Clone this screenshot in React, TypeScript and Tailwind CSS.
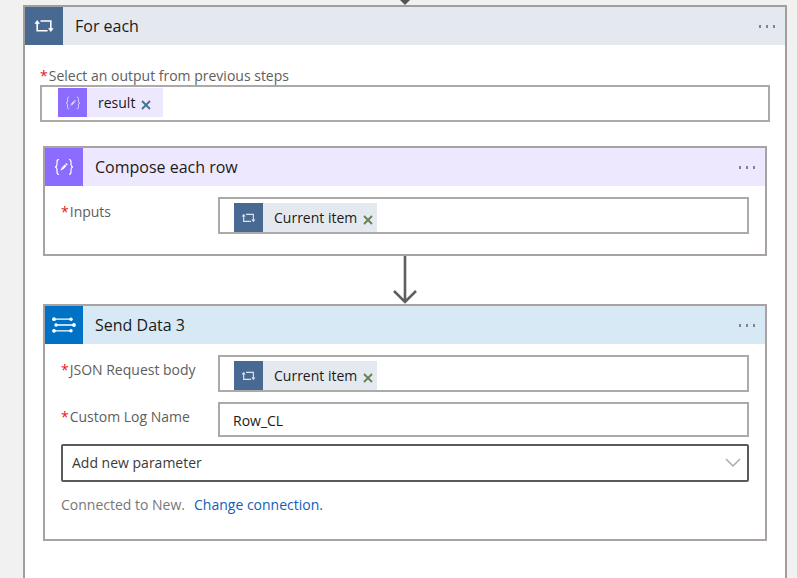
import { useState } from "react";
import type { ReactNode } from "react";

function LoopIcon({ className }: { className: string }) {
  return (
    <svg viewBox="0 0 20 14" className={className} fill="none" stroke="currentColor" strokeWidth="1.6" aria-hidden="true">
      <path d="M3.2 4V11.7H13.5" />
      <path d="M6.5 2H16.8V10" />
      <path d="M0.4 4.8L3.2 1L6 4.8Z" fill="currentColor" stroke="none" />
      <path d="M14 9.2L16.8 13L19.6 9.2Z" fill="currentColor" stroke="none" />
    </svg>
  );
}

function ComposeIcon({ className }: { className: string }) {
  return (
    <svg viewBox="0 0 20 18" className={className} fill="none" stroke="currentColor" strokeWidth="1.2" aria-hidden="true">
      <path d="M5 1.5C3 1.5 3 2.5 3 4.2V6.5C3 8 2.4 8.8 1 9C2.4 9.2 3 10 3 11.5V13.8C3 15.5 3 16.5 5 16.5" />
      <path d="M15 1.5C17 1.5 17 2.5 17 4.2V6.5C17 8 17.6 8.8 19 9C17.6 9.2 17 10 17 11.5V13.8C17 15.5 17 16.5 15 16.5" />
      <path d="M8 11L11.6 7.2" strokeWidth="2.2" />
      <path d="M12 6.8L13 5.8" strokeWidth="2.2" />
      <path d="M6.4 12.6L7.2 10.6L8.4 11.8Z" fill="currentColor" stroke="none" />
    </svg>
  );
}

function DataIcon({ className }: { className: string }) {
  return (
    <svg viewBox="0 0 24 16" className={className} fill="currentColor" stroke="currentColor" aria-hidden="true">
      <g strokeWidth="1.3">
        <path d="M2 2.2H19M4 8H22M2 13.8H19" />
      </g>
      <g stroke="none">
        <circle cx="2" cy="2.2" r="1.9" />
        <circle cx="19" cy="2.2" r="1.7" />
        <circle cx="4" cy="8" r="1.7" />
        <circle cx="22" cy="8" r="1.9" />
        <circle cx="2" cy="13.8" r="1.9" />
        <circle cx="19" cy="13.8" r="1.7" />
      </g>
    </svg>
  );
}

type HeaderProps = { title: string; icon: ReactNode; iconClass: string; barClass: string };

function CardHeader({ title, icon, iconClass, barClass }: HeaderProps) {
  return (
    <header className={`flex h-[38px] items-center ${barClass}`}>
      <span className={`flex h-full w-[38px] shrink-0 items-center justify-center text-white ${iconClass}`}>{icon}</span>
      <h2 className="flex-1 pl-3 text-base leading-6 text-[#1b1a19]">{title}</h2>
      <button type="button" aria-label={`${title} menu`} className="flex h-full items-center gap-[5px] pr-[10px]">
        <span className="h-[3px] w-[2px] bg-[#85828f]" />
        <span className="h-[3px] w-[2px] bg-[#85828f]" />
        <span className="h-[3px] w-[2px] bg-[#85828f]" />
      </button>
    </header>
  );
}

function Label({ htmlFor, children }: { htmlFor: string; children: ReactNode }) {
  return (
    <label htmlFor={htmlFor} className="flex gap-px text-sm leading-[18px] text-[#605e5c]">
      <span className="text-[#e81123]">*</span>
      {children}
    </label>
  );
}

type TokenProps = { text: string; icon: ReactNode; iconClass: string; bodyClass: string; closeClass: string };

function Token({ text, icon, iconClass, bodyClass, closeClass }: TokenProps) {
  return (
    <span className={`flex h-[29px] shrink-0 items-center ${bodyClass}`}>
      <span className={`flex h-full w-[29px] items-center justify-center ${iconClass}`}>{icon}</span>
      <span className="pl-[11px] text-sm leading-5 text-[#1b1a19]">{text}</span>
      <button type="button" aria-label={`Remove ${text}`} className={`pt-1 pl-[6px] ${closeClass}`}>
        <svg viewBox="0 0 10 10" className="size-[10px]" fill="none" stroke="currentColor" strokeWidth="1.8" aria-hidden="true">
          <path d="M1 1L9 9M9 1L1 9" />
        </svg>
      </button>
    </span>
  );
}

function TokenField({ id, className, children }: { id: string; className: string; children: ReactNode }) {
  return (
    <div className={`flex h-[37px] border-2 border-[#acaaa9] bg-white ${className}`}>
      {children}
      <input id={id} type="text" className="min-w-0 flex-1 px-1 text-sm outline-none" />
    </div>
  );
}

function CurrentItem() {
  return (
    <Token
      text="Current item"
      icon={<LoopIcon className="h-[10px] w-[15px]" />}
      iconClass="bg-[#486991] text-[#dde5ee]"
      bodyClass="bg-[#e4e9f0] pr-1"
      closeClass="text-[#66804f]"
    />
  );
}

export default function App() {
  const [logName, setLogName] = useState("Row_CL");

  return (
    <div className="flex min-h-screen flex-col bg-[#f1f1f1] pr-[10px] pl-[23px] font-['Open_Sans','Noto_Sans',sans-serif]">
      <div className="flex h-[5px] justify-center">
        <svg viewBox="0 0 14 5" className="h-[5px] w-[14px]" fill="#555" aria-hidden="true">
          <path d="M2 0H12L7 5Z" />
        </svg>
      </div>

      <main className="flex-1 border-x-2 border-t-2 border-[#a39d9b] bg-white">
        <CardHeader
          title="For each"
          icon={<LoopIcon className="h-[14px] w-5" />}
          iconClass="bg-[#486991]"
          barClass="bg-[#e4e9f0]"
        />

        <section className="px-[15px] pt-[22px]">
          <Label htmlFor="source">Select an output from previous steps</Label>
          <TokenField id="source" className="items-start pt-px pl-4">
            <Token
              text="result"
              icon={<ComposeIcon className="h-[14px] w-4" />}
              iconClass="bg-[#8b6cff] text-[#e2d9ff]"
              bodyClass="bg-[#eee8ff] pr-3"
              closeClass="text-[#3f7590]"
            />
          </TokenField>
        </section>

        <div className="px-[18px] pt-6 pb-9">
          <article className="border-2 border-[#a8a3a2]">
            <CardHeader
              title="Compose each row"
              icon={<ComposeIcon className="h-[18px] w-5" />}
              iconClass="bg-[#8b6cff]"
              barClass="bg-[#eee8ff]"
            />
            <div className="grid grid-cols-[157px_1fr] px-4 pt-[11px] pb-5">
              <div className="pt-[6px]">
                <Label htmlFor="inputs">Inputs</Label>
              </div>
              <TokenField id="inputs" className="items-end pl-[14px]">
                <CurrentItem />
              </TokenField>
            </div>
          </article>

          <div className="flex justify-center">
            <svg viewBox="0 0 26 48" className="h-12 w-[26px]" fill="none" stroke="#605e5e" strokeWidth="2.6" aria-hidden="true">
              <path d="M13 0V46M2 35L13 46L24 35" />
            </svg>
          </div>

          <article className="border-2 border-[#a8a3a2]">
            <CardHeader
              title="Send Data 3"
              icon={<DataIcon className="h-4 w-6" />}
              iconClass="bg-[#0072c6]"
              barClass="bg-[#d8e9f6]"
            />
            <div className="px-4 pt-[11px] pb-6">
              <div className="grid grid-cols-[157px_1fr] gap-y-[10px]">
                <div className="pt-[6px]">
                  <Label htmlFor="body">JSON Request body</Label>
                </div>
                <TokenField id="body" className="items-end pl-[14px]">
                  <CurrentItem />
                </TokenField>
                <div className="pt-[6px]">
                  <Label htmlFor="log-name">Custom Log Name</Label>
                </div>
                <input
                  id="log-name"
                  type="text"
                  value={logName}
                  onChange={(event) => setLogName(event.target.value)}
                  className="h-[35px] w-full min-w-0 border-2 border-[#acaaa9] px-[13px] pt-px text-sm text-[#1b1a19] outline-none"
                />
              </div>

              <div className="mt-[7px] grid items-center">
                <select
                  aria-label="Add new parameter"
                  className="col-start-1 row-start-1 h-[38px] w-full appearance-none rounded-xs border-2 border-[#5c5a59] bg-white px-[9px] text-sm text-[#3b3a39] outline-none"
                >
                  <option>Add new parameter</option>
                </select>
                <svg
                  viewBox="0 0 16 10"
                  className="pointer-events-none col-start-1 row-start-1 mr-2 h-[10px] w-4 justify-self-end"
                  fill="none"
                  stroke="#b0a8a8"
                  strokeWidth="1.5"
                  aria-hidden="true"
                >
                  <path d="M1 1L8 8L15 1" />
                </svg>
              </div>

              <p className="mt-[13px] flex gap-[9px] text-sm leading-5 text-[#797775]">
                <span>Connected to New.</span>
                <a href="#connection" className="text-[#1160b7]">
                  Change connection.
                </a>
              </p>
            </div>
          </article>
        </div>
      </main>
    </div>
  );
}
